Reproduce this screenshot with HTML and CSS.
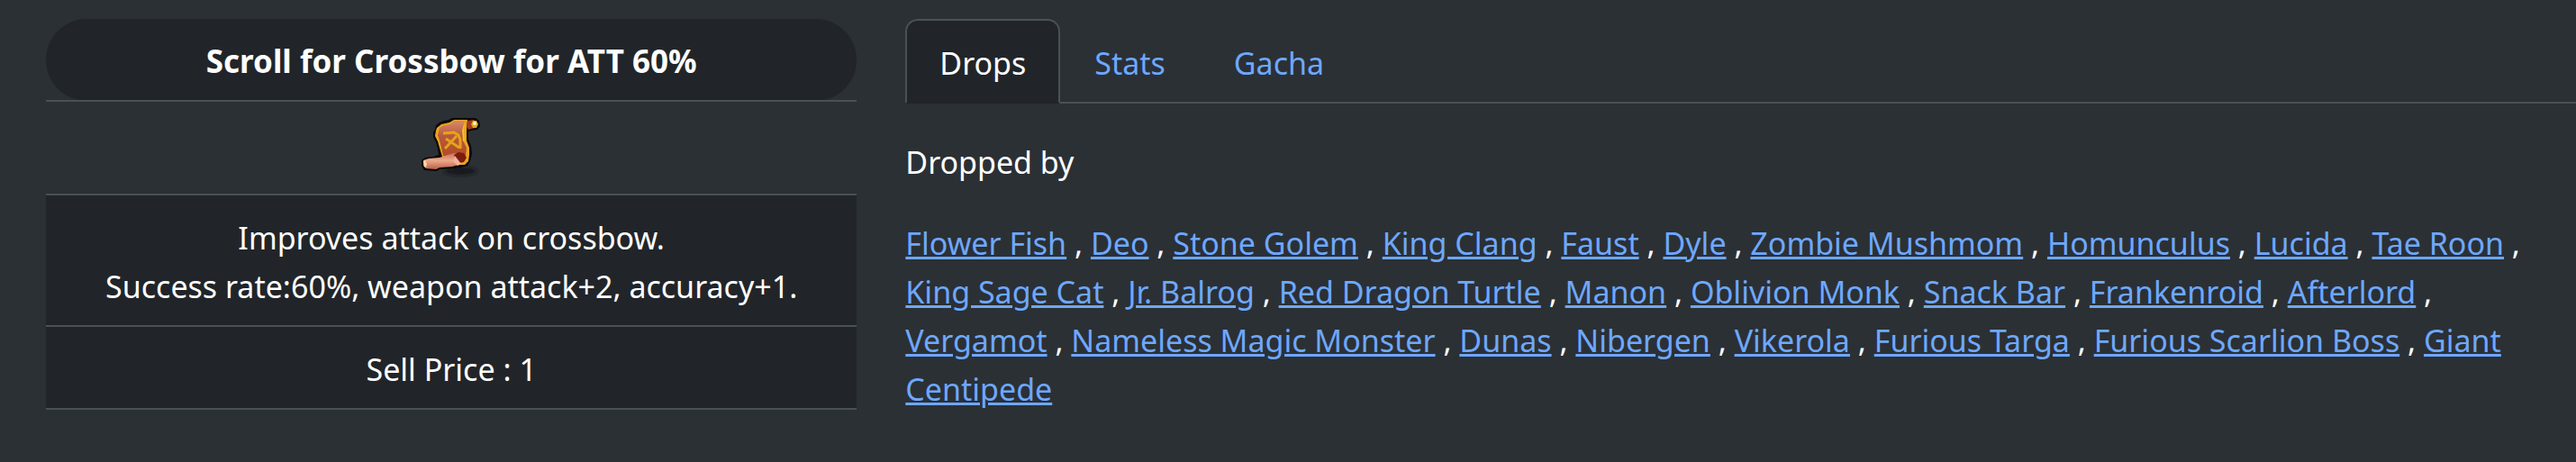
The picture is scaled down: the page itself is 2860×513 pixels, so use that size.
FILE: index.html
```html
<!DOCTYPE html>
<html lang="en">
<head>
    <meta charset="UTF-8">
    <meta name="viewport" content="width=device-width, initial-scale=1.0">
    <title>Scroll for Crossbow for ATT 60%</title>
    <link rel="stylesheet" href="styles.css">
</head>
<body>
    <main class="row">
        <div class="col-item">
            <table class="item-table">
                <thead>
                    <tr>
                        <th>Scroll for Crossbow for ATT 60%</th>
                    </tr>
                </thead>
                <tbody>
                    <tr>
                        <td class="item-image">
                            <svg width="66" height="66" viewBox="0 0 66 66" role="img" aria-label="Scroll">
                                <defs>
                                    <linearGradient id="paper" x1="0" y1="0" x2="0" y2="1">
                                        <stop offset="0" stop-color="#d68a6c"/>
                                        <stop offset="0.4" stop-color="#b8583c"/>
                                        <stop offset="1" stop-color="#b04a22"/>
                                    </linearGradient>
                                    <linearGradient id="roll" x1="0" y1="0" x2="0" y2="1">
                                        <stop offset="0" stop-color="#c9705a"/>
                                        <stop offset="0.45" stop-color="#eda98c"/>
                                        <stop offset="1" stop-color="#b8604a"/>
                                    </linearGradient>
                                    <filter id="soft" x="-20%" y="-60%" width="140%" height="220%">
                                        <feGaussianBlur stdDeviation="2"/>
                                    </filter>
                                </defs>
                                <ellipse cx="43" cy="59" rx="18" ry="4" fill="#15171a" filter="url(#soft)"/>
                                <!-- outline -->
                                <path d="M16 8 L20 5 L25 3 L30 2 L34 0 L60 0 L64 3 L65 9 L62 13 L55 14 L52 15 L52 24 L55 31 L56 40 L54 48 L51 53 L44 55 L36 56 L20 57 L17 59 L3 58 L0 53 L0 47 L4 44 L13 43 L19 41 L18 34 L16 27 L13 21 L13 16 L15 13 Z" fill="#0d0806"/>
                                <!-- gold edge -->
                                <path d="M17 11 L22 7 L31 5 L36 2 L51 2 L50 14 L50 25 L53 33 L53 41 L52 48 L48 52 L40 52 L23 43 L20 33 L18 26 L15 20 L16 14 Z" fill="#e9a51f"/>
                                <path d="M20 11 L25 8 L32 7 L37 3 L48 3 L46 13 L46 25 L50 33 L49 43 L44 46 L24 42 L22 33 L20 25 L18 19 Z" fill="url(#paper)"/>
                                <path d="M48 4 L47 14 L48 25 L46 26 L45 14 Z" fill="#f2c02e"/>
                                <!-- top roll -->
                                <path d="M51 3 L58 2 L62 6 L59 11 L52 13 L50 9 Z" fill="#a8381e"/>
                                <path d="M57 3 L61 3 L63 7 L61 11 L57 11 L55 7 Z" fill="#dba91f"/>
                                <circle cx="59" cy="6" r="2" fill="#fff6c8"/>
                                <!-- crossbow -->
                                <path d="M24 17 L36 16 L41 19 L43 24 L43 34 M26 34 L39 20 M27 23 L42 33" fill="none" stroke="#e5a418" stroke-width="3"/>
                                <!-- bottom roll -->
                                <path d="M2 47 L8 45 L20 44 L29 41 L36 39 L42 40 L43 47 L41 52 L34 54 L20 55 L16 57 L5 56 L2 53 Z" fill="url(#roll)"/>
                                <path d="M36 41 L41 38 L47 39 L50 44 L47 49 L42 50 L38 47 Z" fill="#7c1c10"/>
                                <path d="M37 42 L41 47 L44 51 L40 53 L35 48 Z" fill="#f0b499"/>
                                <path d="M2 48 L4 47 L6 51 L5 55 L3 54 Z" fill="#fbd9a2"/>
                            </svg>
                        </td>
                    </tr>
                    <tr>
                        <td class="dark">Improves attack on crossbow.<br>Success rate:60%, weapon attack+2, accuracy+1.</td>
                    </tr>
                    <tr>
                        <td class="dark">Sell Price : 1</td>
                    </tr>
                </tbody>
            </table>
        </div>

        <div class="col-details">
            <nav class="tabs">
                <button class="tab active">Drops</button>
                <button class="tab">Stats</button>
                <button class="tab">Gacha</button>
            </nav>

            <p>Dropped by</p>
            <p>
                <a href="#">Flower Fish</a> ,
                <a href="#">Deo</a> ,
                <a href="#">Stone Golem</a> ,
                <a href="#">King Clang</a> ,
                <a href="#">Faust</a> ,
                <a href="#">Dyle</a> ,
                <a href="#">Zombie Mushmom</a> ,
                <a href="#">Homunculus</a> ,
                <a href="#">Lucida</a> ,
                <a href="#">Tae Roon</a> ,
                <a href="#">King Sage Cat</a> ,
                <a href="#">Jr. Balrog</a> ,
                <a href="#">Red Dragon Turtle</a> ,
                <a href="#">Manon</a> ,
                <a href="#">Oblivion Monk</a> ,
                <a href="#">Snack Bar</a> ,
                <a href="#">Frankenroid</a> ,
                <a href="#">Afterlord</a> ,
                <a href="#">Vergamot</a> ,
                <a href="#">Nameless Magic Monster</a> ,
                <a href="#">Dunas</a> ,
                <a href="#">Nibergen</a> ,
                <a href="#">Vikerola</a> ,
                <a href="#">Furious Targa</a> ,
                <a href="#">Furious Scarlion Boss</a> ,
                <a href="#">Giant Centipede</a>
            </p>
        </div>
    </main>
</body>
</html>
```
FILE: styles.css
```css
* {
    box-sizing: border-box;
}

body {
    margin: 0;
    font-family: "Segoe UI", "Noto Sans", sans-serif;
    font-size: 34px;
    line-height: 54px;
    color: #fff;
    background-color: #2b3035;
    overflow-x: hidden;
}

.row {
    display: flex;
    margin: 21px -27px 0 24px;
}

.col-item,
.col-details {
    padding: 0 27px;
}

.col-item {
    flex: 0 0 33.3333%;
}

.col-details {
    flex: 1;
    min-width: 0;
}

/* item card */
.item-table {
    width: 100%;
    border-collapse: collapse;
    text-align: center;
}

th, td {
    padding: 20px 18px 16px;
    border-bottom: 2px solid #495057;
}

th {
    font-size: 35px;
    background-color: #212529;
    border-radius: 46px;
}

.dark {
    background-color: #212529;
}

.item-image {
    padding: 18px;
}

.item-image svg {
    display: block;
    margin: 0 auto;
    overflow: visible;
}

/* tabs */
.tabs {
    display: flex;
    margin-bottom: 38px;
    border-bottom: 2px solid #495057;
}

.tab {
    padding: 20px 36px 16px;
    margin-bottom: -2px;
    border: 2px solid transparent;
    border-radius: 14px 14px 0 0;
    background: none;
    color: #6ea8fe;
    font: inherit;
    cursor: pointer;
}

.tab.active {
    color: #fff;
    background-color: #212529;
    border-color: #495057 #495057 #212529;
}

p {
    margin: 0 0 36px;
}

a {
    color: #6ea8fe;
}
```
